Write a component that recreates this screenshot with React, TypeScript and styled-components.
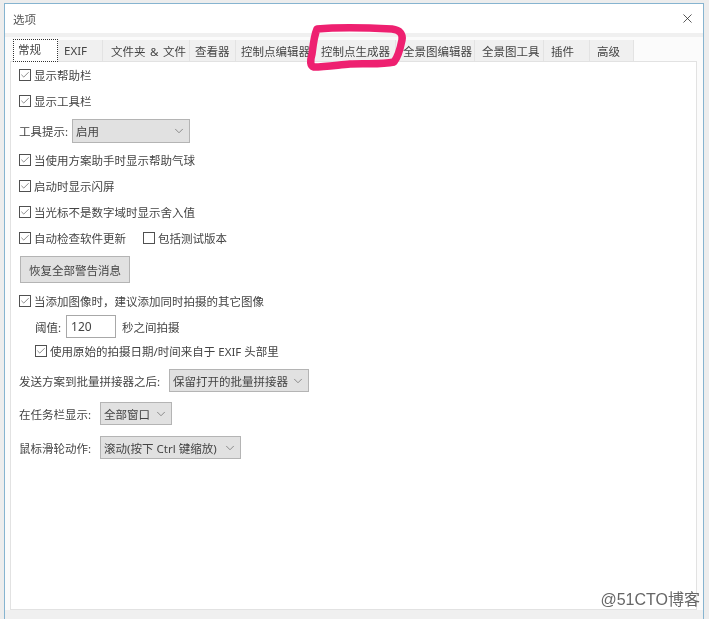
import { createGlobalStyle, styled } from "styled-components";
import { ChevronDown, Check, X } from "lucide-react";

const Global = createGlobalStyle`
  html, body {
    margin: 0;
    padding: 0;
    background: #ededed;
  }
  body {
    font-family: "Noto Sans", "Noto Sans CJK SC", sans-serif;
    font-size: 11.5px;
    color: #444;
  }
`;

const Page = styled.div`
  position: relative;
  width: 709px;
  height: 619px;
  padding: 3px 5px 0 4px;
  box-sizing: border-box;
  overflow: hidden;
  filter: blur(0.35px);
`;

const Win = styled.div`
  height: 616px;
  display: flex;
  flex-direction: column;
  box-sizing: border-box;
  border: 1px solid #86b4d0;
  border-bottom: none;
  background: #fff;
`;

const TitleBar = styled.div`
  height: 29px;
  flex: none;
  display: flex;
  align-items: center;
  justify-content: space-between;
  padding: 0 8px 0 8px;
  color: #555;
`;

const Band = styled.div`
  height: 4px;
  flex: none;
  background: #f0f0f0;
`;

const Body = styled.div`
  flex: 1;
  display: flex;
  flex-direction: column;
  padding: 0 6px 0 5px;
  background: #fbfbfb;
`;

const TabStrip = styled.div`
  display: flex;
  height: 24px;
  flex: none;
  padding: 0 0 0 3px;
  align-items: flex-end;
`;

const Tab = styled.div<{ $w: number; $pad?: number; $active?: boolean }>`
  width: ${(p) => p.$w}px;
  height: ${(p) => (p.$active ? 23 : 21)}px;
  box-sizing: border-box;
  flex: none;
  display: flex;
  align-items: center;
  white-space: pre;
  word-spacing: 1.5px;
  padding-left: ${(p) => p.$pad ?? 6}px;
  padding-bottom: ${(p) => (p.$active ? 3 : 0)}px;
  background: ${(p) => (p.$active ? "#fff" : "#f0f0f0")};
  border-right: 1px solid #e3e3e3;
  border: ${(p) => (p.$active ? "1px dotted #333" : undefined)};
  color: #444;
  margin-bottom: ${(p) => (p.$active ? -1 : 0)}px;
  z-index: ${(p) => (p.$active ? 1 : 0)};
`;

const Panel = styled.div`
  height: 549px;
  flex: none;
  box-sizing: border-box;
  border: 1px solid #e2e2e2;
  background: #fff;
  padding-left: 8px;
  display: flex;
  flex-direction: column;
`;

const Foot = styled.div`
  flex: 1;
  margin: 0 -6px 0 -5px;
  background: #f0f0f0;
`;

const Row = styled.div<{ $top?: number; $h?: number; $indent?: number }>`
  display: flex;
  align-items: center;
  flex: none;
  height: ${(p) => p.$h ?? 26}px;
  margin-top: ${(p) => p.$top ?? 0}px;
  padding-left: ${(p) => p.$indent ?? 0}px;
  white-space: pre;
`;

const Box = styled.span`
  width: 12px;
  height: 12px;
  box-sizing: border-box;
  flex: none;
  display: inline-flex;
  align-items: center;
  justify-content: center;
  border: 1px solid #505050;
  margin-right: 3px;
  background: #fff;
  color: #444;
`;

const Label = styled.span<{ $gap?: number; $left?: number }>`
  margin-right: ${(p) => p.$gap ?? 0}px;
  margin-left: ${(p) => p.$left ?? 0}px;
`;

const SelectBox = styled.div<{ $w: number }>`
  width: ${(p) => p.$w}px;
  height: 100%;
  box-sizing: border-box;
  display: flex;
  align-items: center;
  justify-content: space-between;
  padding: 0 3px 0 3px;
  background: #e1e1e1;
  border: 1px solid #b4b4b4;
  color: #444;
  svg {
    color: #777;
    flex: none;
  }
`;

const Btn = styled.div`
  width: 110px;
  height: 27px;
  box-sizing: border-box;
  display: flex;
  align-items: center;
  justify-content: center;
  background: #e1e1e1;
  border: 1px solid #b4b4b4;
`;

const NumInput = styled.div`
  width: 50px;
  height: 23px;
  box-sizing: border-box;
  display: flex;
  align-items: center;
  padding-left: 4px;
  border: 1px solid #a8a8a8;
  font-size: 12px;
`;

const Scribble = styled.svg`
  position: absolute;
  left: 0;
  top: 0;
  pointer-events: none;
`;

const Watermark = styled.div`
  position: absolute;
  right: 9px;
  top: 590px;
  font-family: "Liberation Sans", "Noto Sans CJK SC", sans-serif;
  font-size: 16px;
  line-height: 20px;
  color: #666;
`;

const tabs = [
  { name: "EXIF", w: 45, pad: 6 },
  { name: "文件夹 & 文件", w: 87, pad: 8 },
  { name: "查看器", w: 46, pad: 5 },
  { name: "控制点编辑器", w: 78, pad: 5 },
  { name: "控制点生成器", w: 82, pad: 7 },
  { name: "全景图编辑器", w: 79, pad: 7 },
  { name: "全景图工具", w: 69, pad: 7 },
  { name: "插件", w: 46, pad: 7 },
  { name: "高级", w: 44, pad: 7 },
];

function CheckBox({ on = true }: { on?: boolean }) {
  return <Box>{on && <Check size={12} strokeWidth={1.5} />}</Box>;
}

function Dropdown({ w, text }: { w: number; text: string }) {
  return (
    <SelectBox $w={w}>
      {text}
      <ChevronDown size={14} strokeWidth={1.4} />
    </SelectBox>
  );
}

export default function App() {
  return (
    <Page>
      <Global />
      <Win>
        <TitleBar>
          选项
          <X size={15} strokeWidth={1.2} color="#222" />
        </TitleBar>
        <Band />
        <Body>
          <TabStrip>
            <Tab $w={45} $pad={4} $active>
              常规
            </Tab>
            {tabs.map((t) => (
              <Tab key={t.name} $w={t.w} $pad={t.pad}>
                {t.name}
              </Tab>
            ))}
          </TabStrip>
          <Panel>
            <Row>
              <CheckBox />
              显示帮助栏
            </Row>
            <Row>
              <CheckBox />
              显示工具栏
            </Row>
            <Row $top={5} $h={24}>
              <Label $gap={4}>工具提示:</Label>
              <Dropdown w={118} text="启用" />
            </Row>
            <Row $top={4}>
              <CheckBox />
              当使用方案助手时显示帮助气球
            </Row>
            <Row>
              <CheckBox />
              启动时显示闪屏
            </Row>
            <Row>
              <CheckBox />
              当光标不是数字域时显示舍入值
            </Row>
            <Row>
              <CheckBox />
              <Label $gap={17}>自动检查软件更新</Label>
              <CheckBox on={false} />
              包括测试版本
            </Row>
            <Row $top={5} $h={27} $indent={1}>
              <Btn>恢复全部警告消息</Btn>
            </Row>
            <Row $top={5}>
              <CheckBox />
              当添加图像时，建议添加同时拍摄的其它图像
            </Row>
            <Row $top={1} $h={23} $indent={16}>
              <Label $gap={5}>阈值:</Label>
              <NumInput>120</NumInput>
              <Label $left={6}>秒之间拍摄</Label>
            </Row>
            <Row $indent={16}>
              <CheckBox />
              使用原始的拍摄日期/时间来自于 EXIF 头部里
            </Row>
            <Row $top={5} $h={23}>
              <Label $gap={9}>发送方案到批量拼接器之后:</Label>
              <Dropdown w={140} text="保留打开的批量拼接器" />
            </Row>
            <Row $top={10} $h={23}>
              <Label $gap={9}>在任务栏显示:</Label>
              <Dropdown w={72} text="全部窗口" />
            </Row>
            <Row $top={11} $h={23}>
              <Label $gap={9}>鼠标滑轮动作:</Label>
              <Dropdown w={141} text="滚动(按下 Ctrl 键缩放)" />
            </Row>
          </Panel>
          <Foot />
        </Body>
      </Win>
      <Scribble width="709" height="619" viewBox="0 0 709 619">
        <path
          d="M317 29 C340 27 372 28 392 29 C400 30 403 34 402 40 C400 50 398 57 394 62 C380 65 365 63 350 64 C338 65 325 67 314 67 C310 66 310 61 312 54 C313 46 314 36 317 29 Z"
          fill="none"
          stroke="#ee2070"
          strokeWidth="7.5"
          strokeLinejoin="round"
        />
      </Scribble>
      <Watermark>@51CTO博客</Watermark>
    </Page>
  );
}
